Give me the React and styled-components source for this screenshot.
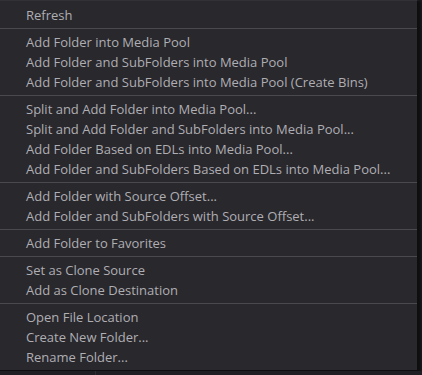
import React from "react";
import styled, { createGlobalStyle } from "styled-components";

const GlobalStyle = createGlobalStyle`
  html, body {
    margin: 0;
    padding: 0;
    background: #1d1d21;
  }
  body {
    width: 422px;
    height: 375px;
    overflow: hidden;
  }
`;

const groups = [
  ["Refresh"],
  [
    "Add Folder into Media Pool",
    "Add Folder and SubFolders into Media Pool",
    "Add Folder and SubFolders into Media Pool (Create Bins)",
  ],
  [
    "Split and Add Folder into Media Pool...",
    "Split and Add Folder and SubFolders into Media Pool...",
    "Add Folder Based on EDLs into Media Pool...",
    "Add Folder and SubFolders Based on EDLs into Media Pool...",
  ],
  [
    "Add Folder with Source Offset...",
    "Add Folder and SubFolders with Source Offset...",
  ],
  ["Add Folder to Favorites"],
  ["Set as Clone Source", "Add as Clone Destination"],
  ["Open File Location", "Create New Folder...", "Rename Folder..."],
];

const App = () => {
  return (
    <Page>
      <GlobalStyle />
      <Menu>
        {groups.map((items, gi) => (
          <React.Fragment key={gi}>
            {gi > 0 && <Separator />}
            {items.map((label) => (
              <Item key={label}>{label}</Item>
            ))}
          </React.Fragment>
        ))}
      </Menu>
      <Underlay>
        <Pane />
      </Underlay>
    </Page>
  );
};

const Page = styled.div`
  display: flex;
  flex-direction: column;
  width: 422px;
  height: 375px;
`;

const Menu = styled.ul`
  list-style: none;
  margin: 0;
  padding: 4px 0 3px;
  width: 418px;
  box-sizing: border-box;
  background: #29282d;
  border-top: 1px solid #323136;
  border-right: 1px solid #0e0e10;
  border-bottom: 1px solid #0e0e10;
  box-shadow: 3px 1px 2px rgba(0, 0, 0, 0.45);
  font-family: "Open Sans", "Noto Sans", sans-serif;
  font-size: 13px;
  color: #afaeb3;
`;

const Item = styled.li`
  height: 20px;
  line-height: 20px;
  padding-left: 26px;
  white-space: nowrap;
  cursor: default;
`;

const Separator = styled.li`
  height: 1px;
  margin: 3px 0;
  background: #4a494e;
`;

const Underlay = styled.div`
  flex: 1;
  display: flex;
  background: #1f1f23;
`;

const Pane = styled.div`
  width: 95px;
  border-right: 1px solid #2e2d32;
`;

export default App;
